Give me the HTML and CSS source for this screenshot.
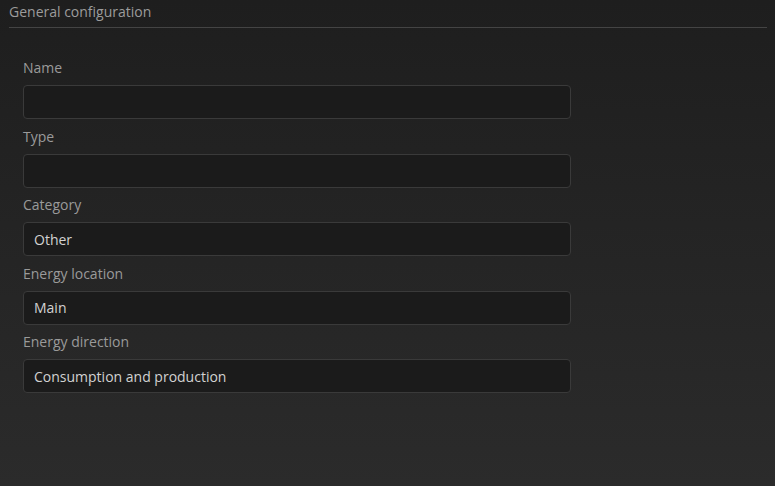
FILE: index.html
```html
<!DOCTYPE html>
<html lang="en">
<head>
<meta charset="utf-8">
<title>General configuration</title>
<link rel="stylesheet" href="styles.css">
</head>
<body>
<div class="page">
  <div class="section-title">General configuration</div>
  <form class="form">
    <div class="field">
      <label class="label">Name</label>
      <input class="input" type="text" value="">
    </div>
    <div class="field">
      <label class="label">Type</label>
      <input class="input" type="text" value="">
    </div>
    <div class="field">
      <label class="label">Category</label>
      <input class="input" type="text" value="Other">
    </div>
    <div class="field">
      <label class="label">Energy location</label>
      <input class="input" type="text" value="Main">
    </div>
    <div class="field">
      <label class="label">Energy direction</label>
      <input class="input" type="text" value="Consumption and production">
    </div>
  </form>
</div>
</body>
</html>
```

FILE: styles.css
```css
html, body {
  margin: 0;
  padding: 0;
  height: 100%;
}
body {
  background: linear-gradient(#1e1e1e, #2b2b2b);
  font-family: "Open Sans", "Liberation Sans", sans-serif;
  font-size: 14px;
  color: #9a9a9a;
  overflow: hidden;
}
.page {
  padding: 2px 8px 0 9px;
}
.section-title {
  line-height: 20px;
  padding-bottom: 5px;
  border-bottom: 1px solid #444;
  color: #9c9c9c;
}
.form {
  display: flex;
  flex-direction: column;
  gap: 7.5px;
  padding: 30px 0 0 14px;
}
.field {
  display: flex;
  flex-direction: column;
}
.label {
  line-height: 20px;
  margin-bottom: 7px;
  color: #9a9a9a;
}
.input {
  box-sizing: border-box;
  width: 548px;
  height: 34px;
  margin: 0;
  padding: 0 10px;
  background: #1b1b1b;
  border: 1px solid #3a3a3a;
  border-radius: 4px;
  font-family: "Open Sans", "Liberation Sans", sans-serif;
  font-size: 14px;
  color: #d2d2d2;
  outline: none;
}
```
